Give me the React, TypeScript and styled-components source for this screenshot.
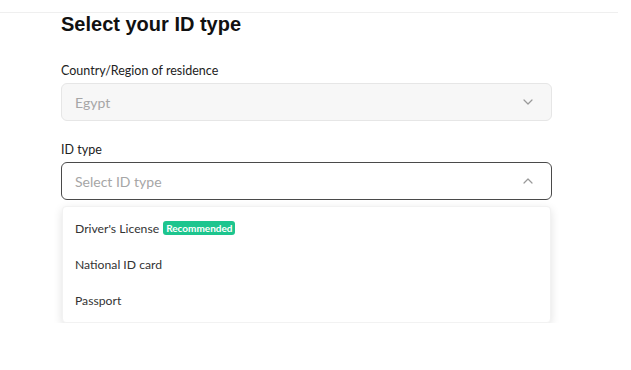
import styled, { createGlobalStyle } from "styled-components";

const GlobalStyle = createGlobalStyle`
  body {
    margin: 0;
    background: #fff;
    font-family: Lato, "Open Sans", sans-serif;
  }
`;

const TopBar = styled.div`
  width: 618px;
  height: 12px;
  border-bottom: 1px solid #efefef;
`;

const Page = styled.div`
  width: 491px;
  padding-left: 61px;
  display: flex;
  flex-direction: column;
`;

const Title = styled.h1`
  margin: 0;
  font-family: "Liberation Sans", Arial, sans-serif;
  font-size: 20px;
  line-height: 22px;
  font-weight: 700;
  color: #111;
`;

const Field = styled.div`
  display: flex;
  flex-direction: column;
  margin-top: 28px;
  & + & {
    margin-top: 21px;
  }
`;

const Label = styled.label`
  font-size: 12.5px;
  line-height: 16px;
  color: #222;
  margin-bottom: 4px;
`;

const SelectBox = styled.div<{ $open?: boolean; $disabled?: boolean }>`
  height: 38px;
  box-sizing: border-box;
  border-radius: 6px;
  border: 1px solid ${(p) => (p.$open ? "#4a4a4a" : "#e6e6e6")};
  background: ${(p) => (p.$disabled ? "#f7f7f7" : "#fff")};
  display: flex;
  align-items: center;
  justify-content: space-between;
  padding: 0 18px 0 13px;
`;

const Value = styled.span`
  font-size: 14px;
  color: #a6a6a6;
`;

const Menu = styled.div`
  margin: 6px 1px 0;
  background: #fff;
  border-radius: 4px;
  box-shadow: 0 3px 10px rgba(0, 0, 0, 0.12);
  border: 1px solid #f2f2f2;
  padding: 3px 0 4px;
`;

const Option = styled.div`
  height: 36px;
  display: flex;
  align-items: center;
  gap: 4px;
  padding: 0 12px;
  font-size: 12.2px;
  color: #333;
`;

const Badge = styled.span`
  background: #1dc58e;
  color: #fff;
  font-size: 10px;
  font-weight: 700;
  line-height: 14px;
  padding: 0 3px;
  border-radius: 3px;
`;

function Chevron({ up }: { up?: boolean }) {
  return (
    <svg width="10" height="6" viewBox="0 0 10 6" fill="none">
      <path
        d={up ? "M1 5 L5 1 L9 5" : "M1 1 L5 5 L9 1"}
        stroke="#999"
        strokeWidth="1.2"
        strokeLinecap="round"
        strokeLinejoin="round"
      />
    </svg>
  );
}

export default function App() {
  return (
    <>
      <GlobalStyle />
      <TopBar />
      <Page>
        <Title>Select your ID type</Title>
        <Field>
          <Label>Country/Region of residence</Label>
          <SelectBox $disabled>
            <Value>Egypt</Value>
            <Chevron />
          </SelectBox>
        </Field>
        <Field>
          <Label>ID type</Label>
          <SelectBox $open>
            <Value>Select ID type</Value>
            <Chevron up />
          </SelectBox>
          <Menu>
            <Option>
              Driver's License<Badge>Recommended</Badge>
            </Option>
            <Option>National ID card</Option>
            <Option>Passport</Option>
          </Menu>
        </Field>
      </Page>
    </>
  );
}
